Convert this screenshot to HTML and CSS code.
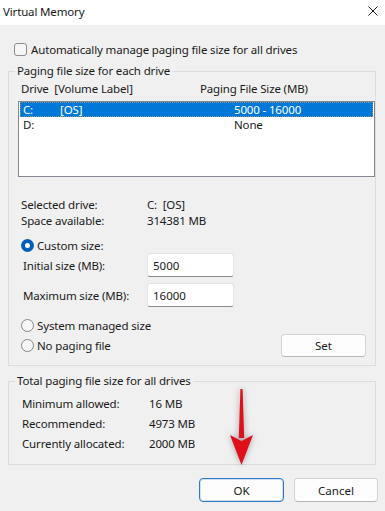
FILE: index.html
```html
<!DOCTYPE html>
<html lang="en">
<head>
    <meta charset="UTF-8">
    <meta name="viewport" content="width=device-width, initial-scale=1.0">
    <title>Virtual Memory</title>
    <link rel="stylesheet" href="styles.css">
</head>
<body>
    <div class="window">
        <div class="titlebar">
            <span class="title">Virtual Memory</span>
            <svg class="close" viewBox="0 0 10 10" width="10" height="10">
                <path d="M0.5 0.5 L9.5 9.5 M9.5 0.5 L0.5 9.5" stroke="#1a1a1a" stroke-width="1" fill="none"/>
            </svg>
        </div>

        <div class="content">
            <div class="check-row">
                <span class="checkbox"></span>
                <span>Automatically manage paging file size for all drives</span>
            </div>

            <fieldset class="group">
                <legend>Paging file size for each drive</legend>
                <div class="group-body">
                    <div class="list-head">
                        <span>Drive&nbsp;&nbsp;[Volume Label]</span>
                        <span>Paging File Size (MB)</span>
                    </div>
                    <div class="listbox">
                        <div class="list-row selected">
                            <span>C:</span><span>[OS]</span><span>5000 - 16000</span>
                        </div>
                        <div class="list-row">
                            <span>D:</span><span></span><span>None</span>
                        </div>
                    </div>

                    <div class="info">
                        <span>Selected drive:</span><span>C:&nbsp;&nbsp;[OS]</span>
                        <span>Space available:</span><span>314381 MB</span>
                    </div>

                    <div class="radio-row first">
                        <span class="radio on"></span>
                        <span>Custom size:</span>
                    </div>
                    <div class="size-row">
                        <label for="initialSize">Initial size (MB):</label>
                        <input type="text" id="initialSize" value="5000">
                    </div>
                    <div class="size-row second">
                        <label for="maxSize">Maximum size (MB):</label>
                        <input type="text" id="maxSize" value="16000">
                    </div>
                    <div class="radio-row system">
                        <span class="radio"></span>
                        <span>System managed size</span>
                    </div>
                    <div class="set-row">
                        <div class="radio-row">
                            <span class="radio"></span>
                            <span>No paging file</span>
                        </div>
                        <button class="btn btn-set">Set</button>
                    </div>
                </div>
            </fieldset>

            <fieldset class="group group-total">
                <legend>Total paging file size for all drives</legend>
                <div class="group-body totals">
                    <span>Minimum allowed:</span><span>16 MB</span>
                    <span>Recommended:</span><span>4973 MB</span>
                    <span>Currently allocated:</span><span>2000 MB</span>
                </div>
            </fieldset>

            <div class="buttons">
                <button class="btn btn-ok">OK</button>
                <button class="btn btn-cancel">Cancel</button>
            </div>
        </div>

        <!-- red pointer arrow drawn over the dialog -->
        <svg class="arrow" viewBox="0 0 45 95" width="45" height="95">
            <polygon points="20.4,9 22.6,9 24.2,58 18.8,58" fill="#e0101a"/>
            <polygon points="10,55 21.5,61 33,55 21.5,85" fill="#e0101a"/>
        </svg>
    </div>
</body>
</html>
```

FILE: styles.css
```css
* {
    box-sizing: border-box;
}

body {
    margin: 0;
    font-family: "Noto Sans", "Open Sans", sans-serif;
    font-size: 11.5px;
    letter-spacing: -0.15px;
    color: #1a1a1a;
    background-color: #f0f0f0;
}

.window {
    width: 385px;
    height: 511px;
    position: relative;
    overflow: hidden;
    background-color: #f0f0f0;
}

.titlebar {
    height: 25px;
    background-color: #fff;
    display: flex;
    align-items: center;
    justify-content: space-between;
    padding: 0 7px 3px 3px;
}

.close {
    display: block;
}

.content {
    padding: 0 9px 0 8px;
}

.check-row {
    display: flex;
    align-items: center;
    gap: 4px;
    height: 16px;
    margin-top: 16px;
    padding-left: 6px;
}

.checkbox {
    width: 13px;
    height: 13px;
    border: 1px solid #8b8b8b;
    border-radius: 3px;
    background-color: #f6f6f6;
}

/* Group boxes */
.group {
    margin: 6px 0 0;
    padding: 0;
    border: 1px solid #dcdcdc;
    min-width: 0;
}

.group legend {
    padding: 0 2px;
    margin-left: 6px;
    line-height: 16px;
}

.group-body {
    padding: 2px 0 8px 9px;
}

.list-head {
    display: grid;
    grid-template-columns: 179px 1fr;
    padding-left: 3px;
    line-height: 16px;
}

.listbox {
    margin-top: 4px;
    height: 76px;
    border: 1px solid #828790;
    background-color: #fff;
    padding: 0 1px;
}

.list-row {
    display: grid;
    grid-template-columns: 37px 174px 1fr;
    padding-left: 3px;
    height: 15px;
    line-height: 15px;
}

.list-row.selected {
    background-color: #0078d7;
    color: #fff;
    outline: 1px dotted rgba(245, 175, 80, 0.55);
    outline-offset: -1px;
}

.info {
    display: grid;
    grid-template-columns: 126px 1fr;
    margin-top: 20px;
    padding-left: 3px;
    line-height: 16px;
}

.radio-row {
    display: flex;
    align-items: center;
    gap: 3px;
    height: 16px;
    padding-left: 3px;
}

.radio-row.first {
    margin-top: 8px;
}

.radio-row.system {
    margin-top: 10px;
}

.radio {
    width: 13px;
    height: 13px;
    border-radius: 50%;
    border: 1px solid #868686;
    background-color: #f7f7f7;
}

.radio.on {
    border: none;
    background-color: #fff;
    box-shadow: inset 0 0 0 4px #005fb8;
}

.size-row {
    display: flex;
    align-items: center;
    height: 24px;
    padding-left: 5px;
}

.size-row.second {
    margin-top: 6px;
}

.size-row label {
    width: 124px;
}

.size-row input {
    width: 87px;
    height: 24px;
    border: 1px solid #e3e3e3;
    border-bottom-color: #8a8a8a;
    border-radius: 3px;
    padding: 0 5px;
    font: inherit;
    color: #1a1a1a;
    background-color: #fff;
}

.set-row {
    display: flex;
    align-items: center;
    justify-content: space-between;
    height: 23px;
    margin-top: 1px;
}

/* Buttons */
.btn {
    font: inherit;
    color: #1a1a1a;
    background-color: #fdfdfd;
    border: 1px solid #d3d3d3;
    border-bottom-color: #b8b8b8;
    border-radius: 4px;
    padding: 0;
}

.btn-set {
    width: 85px;
    height: 23px;
    margin-right: 9px;
}

.group-total {
    margin-top: 7px;
}

.totals {
    display: grid;
    grid-template-columns: 127px 1fr;
    grid-auto-rows: 20px;
    align-items: center;
    padding: 4px 0 11px 13px;
}

.buttons {
    display: flex;
    justify-content: flex-end;
    gap: 10px;
    margin-top: 13px;
    margin-right: -2px;
}

.btn-ok {
    width: 85px;
    height: 24px;
    border-color: #2f78c4;
    box-shadow: inset 0 0 0 1px #cfe0f3;
}

.btn-cancel {
    width: 84px;
    height: 24px;
}

.arrow {
    position: absolute;
    left: 220px;
    top: 380px;
    filter: drop-shadow(0 0 3px rgba(0, 0, 0, 0.35));
}
```
